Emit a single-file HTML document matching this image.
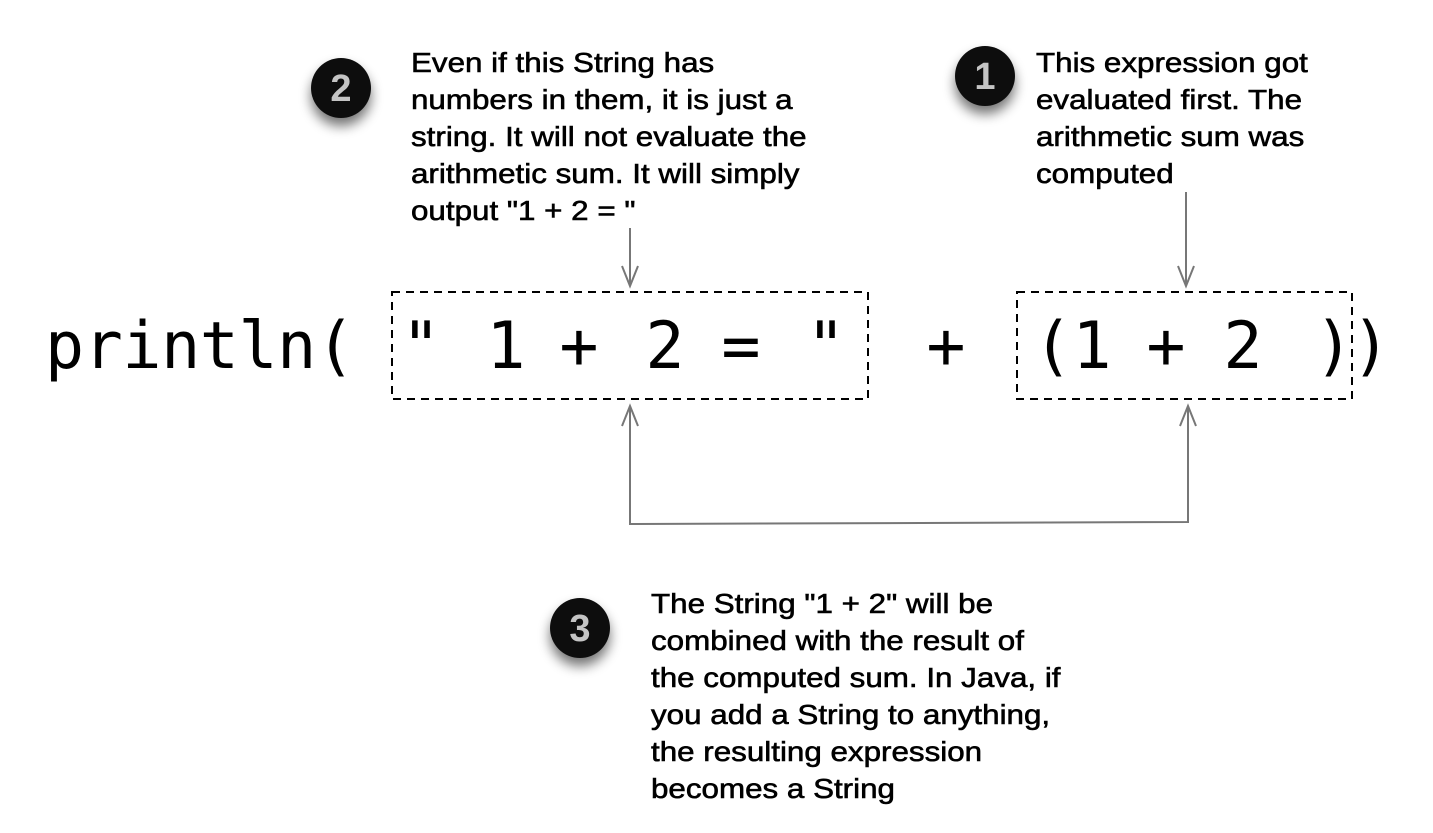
<!DOCTYPE html>
<html><head><meta charset="utf-8"><style>
html,body{margin:0;padding:0;background:#fff;width:1433px;height:833px;overflow:hidden}
svg{display:block}
.t{font-family:"Liberation Sans",Arial,sans-serif;font-size:28px;fill:#000;stroke:#000;stroke-width:0.6px}
.c{font-family:"DejaVu Sans Mono","Liberation Mono",monospace;font-size:65px;fill:#000}
.n{font-family:"Liberation Sans",Arial,sans-serif;font-size:38px;font-weight:bold;fill:#c4c4c4;text-anchor:middle}
</style></head><body>
<svg width="1433" height="833" viewBox="0 0 1433 833">
<defs>
<filter id="sh" x="-80%" y="-80%" width="260%" height="260%"><feGaussianBlur in="SourceAlpha" stdDeviation="6"/><feOffset dx="0" dy="8"/><feComponentTransfer><feFuncA type="linear" slope="0.55"/></feComponentTransfer><feMerge><feMergeNode/><feMergeNode in="SourceGraphic"/></feMerge></filter>
</defs>
<g filter="url(#sh)"><circle cx="341" cy="88" r="30" fill="#111"/></g>
<text class="n" x="341" y="101">2</text>
<g filter="url(#sh)"><circle cx="985" cy="76" r="30" fill="#111"/></g>
<text class="n" x="985" y="89">1</text>
<g filter="url(#sh)"><circle cx="580" cy="628" r="30" fill="#111"/></g>
<text class="n" x="580" y="641">3</text>

<g class="t" transform="translate(411 0) scale(1.12 1)">
<text x="0" y="72">Even if this String has</text>
<text x="0" y="109">numbers in them, it is just a</text>
<text x="0" y="146">string.  It will not evaluate the</text>
<text x="0" y="183">arithmetic sum. It will simply</text>
<text x="0" y="220">output "1 + 2 = "</text>
</g>
<g class="t" transform="translate(1036 0) scale(1.12 1)">
<text x="0" y="72">This expression got</text>
<text x="0" y="109">evaluated first. The</text>
<text x="0" y="146">arithmetic sum was</text>
<text x="0" y="183">computed</text>
</g>
<g class="t" transform="translate(651 0) scale(1.12 1)">
<text x="0" y="613">The String "1 + 2" will be</text>
<text x="0" y="650">combined with the result of</text>
<text x="0" y="687">the computed sum. In Java, if</text>
<text x="0" y="724">you add a String to anything,</text>
<text x="0" y="761">the resulting expression</text>
<text x="0" y="798">becomes a String</text>
</g>

<rect x="392" y="292" width="476" height="107" fill="none" stroke="#000" stroke-width="2" stroke-dasharray="8,6"/>
<rect x="1017" y="292" width="335" height="107" fill="none" stroke="#000" stroke-width="2" stroke-dasharray="8,6"/>

<g class="c">
<text x="45" y="368" textLength="310">println(</text>
<g text-anchor="middle">
<text x="421" y="368">"</text>
<text x="506" y="368">1</text>
<text x="579" y="368">+</text>
<text x="665" y="368">2</text>
<text x="741" y="368">=</text>
<text x="826" y="368">"</text>
<text x="946" y="368">+</text>
<text x="1053" y="368">(</text>
<text x="1092" y="368">1</text>
<text x="1166" y="368">+</text>
<text x="1243" y="368">2</text>
<text x="1334" y="368">)</text>
<text x="1371" y="368">)</text>
</g>
</g>

<g stroke="#777" stroke-width="2" fill="none">
<line x1="630" y1="228" x2="630" y2="286"/>
<polyline points="622,266 630,286 638,266"/>
<line x1="1186" y1="192" x2="1186" y2="286"/>
<polyline points="1178,266 1186,286 1194,266"/>
<polyline points="630,406 630,524 1188,522 1188,406"/>
<polyline points="622,426 630,406 638,426"/>
<polyline points="1180,426 1188,406 1196,426"/>
</g>
</svg>
</body></html>
